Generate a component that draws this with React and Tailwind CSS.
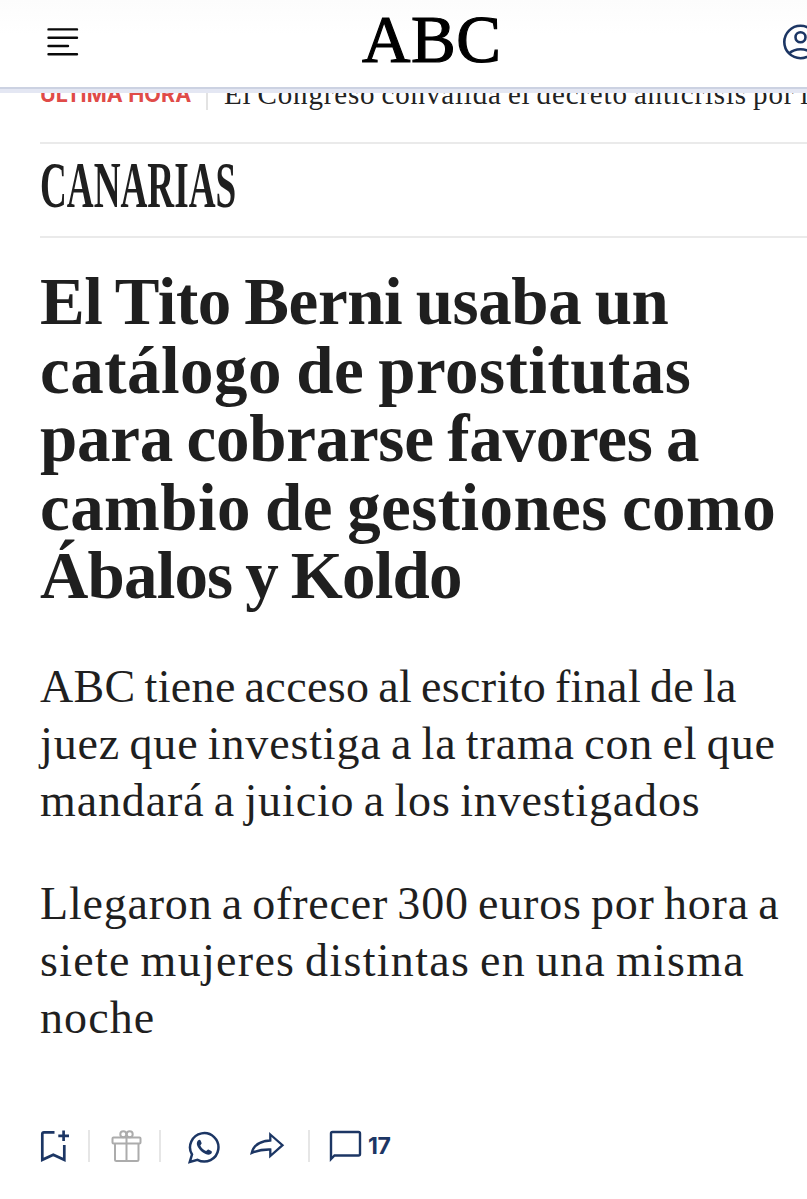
import React from 'react';

const headline = [
  { text: 'El Tito Berni usaba un', tracking: 'tracking-[-0.4px]' },
  { text: 'catálogo de prostitutas', tracking: 'tracking-[0.47px]' },
  { text: 'para cobrarse favores a', tracking: 'tracking-[-0.26px]' },
  { text: 'cambio de gestiones como', tracking: 'tracking-[0.42px]' },
  { text: 'Ábalos y Koldo', tracking: 'tracking-[-0.84px]' },
];

const summary = [
  [
    { text: 'ABC tiene acceso al escrito final de la', tracking: 'tracking-[0.36px]' },
    { text: 'juez que investiga a la trama con el que', tracking: 'tracking-[0.86px]' },
    { text: 'mandará a juicio a los investigados', tracking: 'tracking-[0.87px]' },
  ],
  [
    { text: 'Llegaron a ofrecer 300 euros por hora a', tracking: 'tracking-[0.8px]' },
    { text: 'siete mujeres distintas en una misma', tracking: 'tracking-[1.3px]' },
    { text: 'noche', tracking: 'tracking-[1.1px]' },
  ],
];

const Lines = ({ lines }) =>
  lines.map((line) => (
    <span key={line.text} className={`block whitespace-nowrap ${line.tracking}`}>
      {line.text}
    </span>
  ));

const Divider = () => <div className="h-8 w-[2px] shrink-0 bg-[#e6e6e6]" />;

const Header = () => (
  <header className="flex h-[93px] w-full shrink-0 flex-col">
    <div className="grid h-[87px] grid-cols-[362px_1fr_24px] items-center bg-gradient-to-b from-[#fcfcfc] to-white to-40%">
      <button className="ml-[46px] mt-[-3px] w-8" aria-label="Menú">
        <svg width="33" height="30" viewBox="0 0 33 30" stroke="#0a0a0a" strokeWidth="2.4" strokeLinecap="round">
          <path d="M2.5 2.4H31M2.5 10.7H31M2.5 19H22M2.5 27.3H31" />
        </svg>
      </button>
      <div className="mt-[-8px] font-['Liberation_Serif',serif] text-[67px] leading-[75px] tracking-[0.6px] text-black [-webkit-text-stroke:1.2px_black]">
        ABC
      </div>
      <button className="w-[36px] mt-[-3px]" aria-label="Mi cuenta">
        <svg width="36" height="36" viewBox="0 0 36 36" fill="none" stroke="#1c3664" strokeWidth="2.6">
          <circle cx="17.5" cy="18" r="16.2" />
          <circle cx="17.5" cy="13.3" r="5" />
          <path d="M6 29.5C9 26.8 13 25.3 17.5 25.3S26 26.8 29 29.5" />
        </svg>
      </button>
    </div>
    <div className="h-[2px] bg-[#ccd2e2]" />
    <div className="h-[4px] bg-[#e4e7f3]" />
  </header>
);

const Ticker = () => (
  <div className="flex h-[49px] items-start overflow-hidden whitespace-nowrap pl-[40px]">
    <span className="mt-[-14px] w-[166px] shrink-0 font-['Inter',sans-serif] text-[21.5px] font-bold leading-[30px] tracking-[0.1px] text-[#e04b48]">
      ÚLTIMA HORA
    </span>
    <span className="h-[17px] w-[2px] shrink-0 bg-[#e3e3e3]" />
    <span className="ml-[16px] mt-[-16px] font-['Liberation_Serif',serif] text-[29px] leading-[34px] tracking-[0.84px] text-[#222] [word-spacing:-2px]">
      El Congreso convalida el decreto anticrisis por los
    </span>
  </div>
);

const Actions = () => (
  <div className="mt-[81px] flex h-[36px] items-center text-[#1c3664]">
    <button aria-label="Guardar">
      <svg width="30" height="34" viewBox="0 0 30 34" fill="none" stroke="currentColor" strokeWidth="2.7">
        <path d="M14.5 3.3H4Q2.3 3.3 2.3 5V30.8L13.3 25.7L24.3 30.8V16M18.3 6.8H29M23.6 1.5V12" />
      </svg>
    </button>
    <div className="ml-[18px]"><Divider /></div>
    <button className="ml-[21px]" aria-label="Regalar">
      <svg width="31" height="34" viewBox="0 0 31 34" fill="none" stroke="#acacac" strokeWidth="2">
        <rect x="1.5" y="8.5" width="28" height="6" rx="1" />
        <path d="M4 14.5V30.5Q4 32 5.5 32H26Q27.5 32 27.5 30.5V14.5M15.5 8.5V32" />
        <circle cx="12.3" cy="5.2" r="3" />
        <circle cx="18.7" cy="5.2" r="3" />
      </svg>
    </button>
    <div className="ml-[17px]"><Divider /></div>
    <button className="ml-[27px] mt-[3px]" aria-label="WhatsApp">
      <svg width="33" height="33" viewBox="0 0 33 33" fill="none" stroke="currentColor" strokeWidth="2.5">
        <path d="M1.8 30.9L4 23.5A14.2 14.2 0 1 1 9.5 28.8Z" />
        <path
          d="M10.3 9.3C11.3 8.4 12.2 8.7 12.7 9.7L13.6 12C13.9 12.9 12.6 13.9 12.3 14.6C13.3 17 15.5 18.9 18 19.9C18.8 19.7 19.6 18.2 20.4 18.5L23.3 19.9C24.6 20.6 23.7 22.2 22.7 23C20.6 24.5 17.3 23.2 14.9 21.5C12.3 19.6 9.7 16.6 9 14C8.5 12.1 9.2 10.2 10.3 9.3Z"
          fill="currentColor"
          stroke="none"
        />
      </svg>
    </button>
    <button className="ml-[29px] mt-[-2px]" aria-label="Compartir">
      <svg width="35" height="28" viewBox="0 0 35 28" fill="none" stroke="currentColor" strokeWidth="2.3">
        <path d="M20.3 3.5L32.5 14.2L20.3 25V18.5C13 18.3 7 19.5 1.7 22C3.5 14.5 10.5 10 20.3 9.5Z" />
      </svg>
    </button>
    <div className="ml-[23px]"><Divider /></div>
    <button className="ml-[19px] flex items-center" aria-label="Comentarios">
      <svg width="33" height="34" viewBox="0 0 33 34" fill="none" stroke="currentColor" strokeWidth="2.4">
        <path d="M2 30V4.5Q2 3 3.5 3H29.5Q31 3 31 4.5V25Q31 26.5 29.5 26.5H5.5Z" />
      </svg>
      <span className="ml-[6px] mt-[1px] font-['Inter',sans-serif] text-[23px] font-bold leading-none tracking-[-0.5px]">17</span>
    </button>
  </div>
);

const App = () => {
  return (
    <div className="h-[1199px] w-[807px] overflow-hidden bg-white">
      <Header />
      <Ticker />
      <main className="ml-[40px] font-['Liberation_Serif',serif] text-[#1f1f1f]">
        <div className="flex h-[96px] items-center border-y-2 border-[#eaeaea]">
          <p className="mt-[-11px] origin-left scale-x-[0.563] whitespace-nowrap text-[66px] font-bold leading-none">CANARIAS</p>
        </div>
        <h1 className="mt-[29px] text-[67px] font-bold leading-[68.6px] [word-spacing:-3px]">
          <Lines lines={headline} />
        </h1>
        <p className="mt-[49px] text-[46px] leading-[56.8px] [word-spacing:-3px]">
          <Lines lines={summary[0]} />
        </p>
        <p className="mt-[47px] text-[46px] leading-[56.8px] [word-spacing:-3px]">
          <Lines lines={summary[1]} />
        </p>
        <Actions />
      </main>
    </div>
  );
};

export default App;
